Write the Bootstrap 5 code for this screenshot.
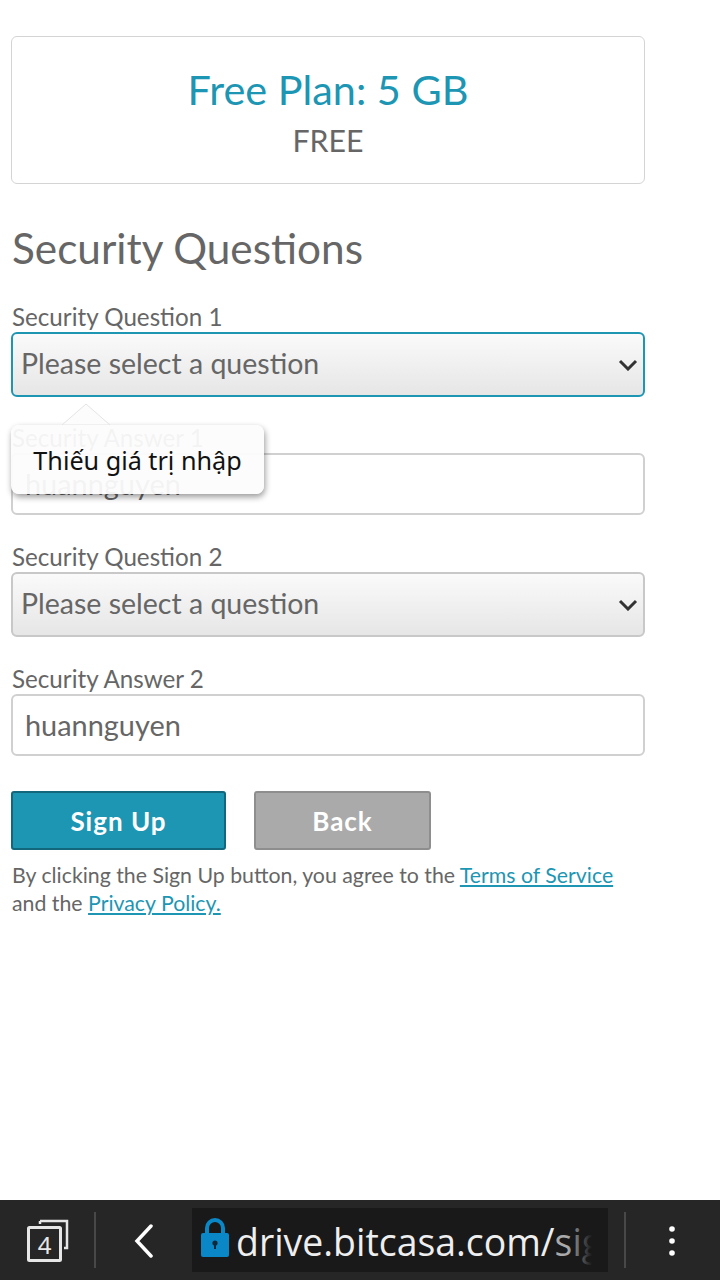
<!DOCTYPE html>
<html lang="en">
<head>
<meta charset="utf-8">
<title>Sign Up</title>
<link rel="stylesheet" href="https://cdn.jsdelivr.net/npm/bootstrap@5.3.0/dist/css/bootstrap.min.css">
<style>
html,body{height:1280px;overflow:hidden}
body{font-family:"Lato","Noto Sans",sans-serif;color:#666;background:#fff}
.pg-main{padding:36px 75px 0 11px;width:720px}
.plan-box{height:148px;border:1px solid #d4d4d4;border-radius:6px;text-align:center;padding-top:23px;margin-bottom:36px}
.plan-title{font-size:41.4px;line-height:58px;color:#1d96b4}
.plan-price{font-size:30.3px;line-height:40px;margin-top:2px;color:#666}
.sec-title{font-size:42.3px;line-height:56px;font-weight:400;color:#666;margin:0 0 26px 1px}
.fld-label{display:block;font-size:24.2px;line-height:29px;margin:0 0 1px 1px;color:#666}
.gap-a{margin-top:26px}
.gap-b{margin-top:27px}
.form-select.q-select{height:65px;font-size:28.5px;line-height:40px;color:#666;padding:0 40px 4px 8px;border:2px solid #c8c8c8;border-radius:6px;
 background-color:#eee;background-image:url("data:image/svg+xml,%3Csvg xmlns='http://www.w3.org/2000/svg' viewBox='0 0 20 12'%3E%3Cpath d='M2 2l8 8 8-8' fill='none' stroke='%23333' stroke-width='3'/%3E%3C/svg%3E"),linear-gradient(#fafafa,#e6e6e6);
 background-repeat:no-repeat,no-repeat;background-position:right 5px center,0 0;background-size:20px 12px,100% 100%}
.form-select.q-select.is-focus{border-color:#1d96b4}
.form-control.a-input{height:62px;font-size:28.9px;color:#666;padding:0 12px 2px;border:2px solid #d0d0d0;border-radius:6px}
.act-row{gap:28px;margin-top:35px}
.act-btn{height:59px;font-size:26px;font-weight:700;letter-spacing:1px;color:#fff;border-radius:3px;padding:0;line-height:1;display:flex;align-items:center;justify-content:center}
.act-signup{width:215px;background:#1d96b4;border:2px solid #12677d}
.act-back{width:177px;background:#aaa;border:2px solid #8e8e8e}
.act-signup:hover{background:#1d96b4;color:#fff;border-color:#12677d}
.act-back:hover{background:#aaa;color:#fff;border-color:#8e8e8e}
.legal{font-size:21.3px;line-height:28px;margin:11px 0 0 1px;color:#666;white-space:nowrap}
.legal a{color:#1d96b4}
.tip-anchor{position:relative}
.tip-pop{position:absolute;left:0;top:2px;width:253px;height:69px;padding-top:2px;background:rgba(252,252,252,.94);border-radius:8px;box-shadow:1px 3px 6px rgba(0,0,0,.4);font-family:"Noto Sans",sans-serif;font-size:25.2px;color:#111;display:flex;align-items:center;justify-content:center;z-index:5}
.tip-arrow{position:absolute;left:50px;top:-22px;width:50px;height:22px}
.btm-bar{height:80px;background:#262626;padding:8px 0;align-items:center}
.url-box{position:absolute;left:192px;top:8px;width:416px;height:64px;background:#191919;overflow:hidden}
.url-text{position:absolute;left:44px;top:0;white-space:nowrap;font-family:"Open Sans",sans-serif;font-size:37.4px;line-height:68px;color:#eee}
.url-text span{color:#aaa}
.url-fade{position:absolute;left:376px;top:0;width:40px;height:64px;background:linear-gradient(90deg,rgba(25,25,25,0),#191919 60%)}
.bar-sep{position:absolute;top:12px;width:2px;height:56px;background:#484848}
.bar-wrap{position:relative}
.bar-icon{position:absolute}
.tab-num{font-family:"Noto Sans",sans-serif}
</style>
</head>
<body class="d-flex flex-column">
<main class="pg-main flex-grow-1">
  <div class="plan-box">
    <div class="plan-title">Free Plan: 5 GB</div>
    <div class="plan-price">FREE</div>
  </div>
  <h2 class="sec-title">Security Questions</h2>
  <form>
    <div>
      <label class="fld-label">Security Question 1</label>
      <select class="form-select q-select is-focus"><option>Please select a question</option></select>
    </div>
    <div class="tip-anchor gap-a">
      <div class="tip-pop">
        <svg class="tip-arrow" viewBox="0 0 50 22"><path d="M1 22 25 1l24 21z" fill="#fcfcfc" stroke="#e4e4e4" stroke-width="1"/></svg>
        Thiếu giá trị nhập
      </div>
      <label class="fld-label">Security Answer 1</label>
      <input class="form-control a-input" value="huannguyen">
    </div>
    <div class="gap-b">
      <label class="fld-label">Security Question 2</label>
      <select class="form-select q-select"><option>Please select a question</option></select>
    </div>
    <div class="gap-b">
      <label class="fld-label">Security Answer 2</label>
      <input class="form-control a-input" value="huannguyen">
    </div>
    <div class="d-flex act-row">
      <button type="button" class="btn act-btn act-signup">Sign Up</button>
      <button type="button" class="btn act-btn act-back">Back</button>
    </div>
    <p class="legal">By clicking the Sign Up button, you agree to the <a href="#">Terms of Service</a><br>and the <a href="#">Privacy Policy.</a></p>
  </form>
</main>
<footer class="btm-bar bar-wrap">
  <svg class="bar-icon" style="left:26px;top:18px" width="46" height="46" viewBox="0 0 46 46" fill="none">
    <path d="M14 3h27v27h-3" stroke="#e6e6e6" stroke-width="2.5"/>
    <path d="M14 3v3" stroke="#e6e6e6" stroke-width="2.5"/>
    <rect x="2.5" y="9.5" width="32" height="33" rx="1" stroke="#e6e6e6" stroke-width="3"/>
    <text x="18.5" y="36" text-anchor="middle" class="tab-num" font-size="24" fill="#e6e6e6">4</text>
  </svg>
  <div class="bar-sep" style="left:94px"></div>
  <svg class="bar-icon" style="left:134px;top:24px" width="20" height="34" viewBox="0 0 20 34" fill="none"><path d="M17 2 3 17l14 15" stroke="#fff" stroke-width="3.5" stroke-linecap="round"/></svg>
  <div class="url-box">
    <svg class="bar-icon" style="left:9px;top:10px" width="28" height="39" viewBox="0 0 28 39"><path d="M6 15V10a8 8 0 0 1 16 0v5" fill="none" stroke="#0a87c6" stroke-width="4"/><rect x="0" y="15" width="28" height="24" rx="2" fill="#0a87c6"/><circle cx="14" cy="25" r="2.6" fill="#10293a"/><rect x="13" y="25" width="2" height="6" fill="#10293a"/></svg>
    <div class="url-text">drive.bitcasa.com/<span>sig</span></div>
    <div class="url-fade"></div>
  </div>
  <div class="bar-sep" style="left:624px"></div>
  <svg class="bar-icon" style="left:666px;top:24px" width="12" height="32" viewBox="0 0 12 32" fill="#fff"><circle cx="6" cy="5" r="2.8"/><circle cx="6" cy="17" r="2.8"/><circle cx="6" cy="29" r="2.8"/></svg>
</footer>
<script src="https://cdn.jsdelivr.net/npm/bootstrap@5.3.0/dist/js/bootstrap.bundle.min.js"></script>
</body>
</html>
